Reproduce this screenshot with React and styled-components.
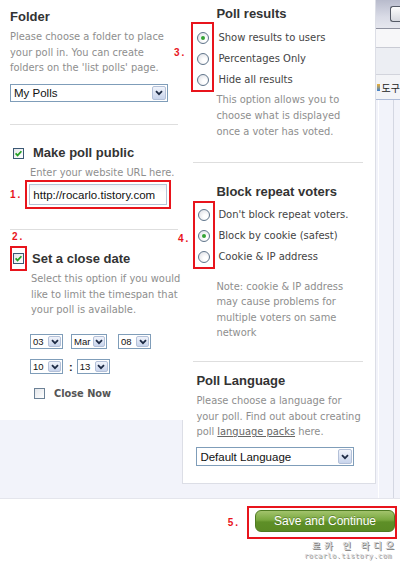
import React from 'react';
import styled, { createGlobalStyle } from 'styled-components';

const GlobalStyle = createGlobalStyle`
  html, body { margin: 0; padding: 0; background: #fff; }
  body { font-family: "DejaVu Sans", Verdana, sans-serif; }
`;

const Screen = styled.div`
  position: relative;
  width: 400px;
  height: 561px;
  overflow: hidden;
  background: #fff;
`;

const Workspace = styled.div`
  display: flex;
  align-items: flex-start;
  height: 499px;
  box-sizing: border-box;
  background: #f2f3fa;
  border-bottom: 1px solid #e4e5ec;
`;

const LeftPanel = styled.div`
  position: relative;
  z-index: 1;
  width: 185px;
  height: 420px;
  box-sizing: border-box;
  padding: 9px 0 0 10px;
  background: #fff;
`;

const RightPanel = styled.div`
  width: 195px;
  height: 484px;
  margin-left: -1px;
  box-sizing: border-box;
  padding-top: 6px;
  background: #fff;
  border: 1px solid #dcdee6;
  border-top: none;
`;

const Title = styled.div`
  font-family: "Liberation Sans", Arial, sans-serif;
  font-weight: bold;
  font-size: 13px;
  line-height: 16px;
  color: #333;
  margin-top: ${p => p.$mt || 0}px;
  margin-left: ${p => p.$ml || 0}px;
  grid-column: ${p => p.$col || 'auto'};
  white-space: nowrap;
`;

const Hint = styled.div`
  font-size: 9.9px;
  line-height: ${p => p.$lh || 15.5}px;
  color: #8e8e8e;
  margin-top: ${p => p.$mt || 0}px;
  margin-left: ${p => p.$ml || 0}px;
  grid-column: ${p => p.$col || 'auto'};
  white-space: nowrap;
`;

const Link = styled.span`
  color: #666;
  text-decoration: underline;
`;

const Divider = styled.div`
  height: 1px;
  background: #dedede;
  width: ${p => p.$w}px;
  margin-top: ${p => p.$mt}px;
  margin-left: ${p => p.$ml || 0}px;
`;

const Row = styled.div`
  display: flex;
  align-items: center;
  margin-top: ${p => p.$mt || 0}px;
  margin-left: ${p => p.$ml || 0}px;
`;

const RedBox = styled.div`
  position: relative;
  box-sizing: border-box;
  border: 2px solid #e8141c;
  padding: ${p => p.$pad || '0'};
  margin-top: ${p => p.$mt || 0}px;
  display: flex;
  flex-direction: ${p => (p.$column ? 'column' : 'row')};
  align-items: center;
  grid-column: ${p => p.$col || 'auto'};
`;

const Marker = styled.span`
  font-family: "Liberation Sans", Arial, sans-serif;
  font-weight: bold;
  font-size: 10px;
  line-height: 10px;
  letter-spacing: 2px;
  color: #e8141c;
  white-space: nowrap;
  margin-left: ${p => p.$ml || 0}px;
  margin-right: ${p => p.$mr || 0}px;
  margin-top: ${p => p.$mt || 0}px;
  display: block;
`;

const SideMarker = styled(Marker)`
  position: absolute;
  z-index: 2;
  right: calc(100% + ${p => p.$gap}px);
  top: ${p => p.$top}px;
`;

const CheckBoxFrame = styled.span`
  flex: none;
  width: 11px;
  height: 11px;
  box-sizing: border-box;
  border: 1px solid ${p => (p.$on ? '#3b5874' : '#6c8196')};
  background: linear-gradient(135deg, #e4e6ea, #fff);
  display: flex;
  align-items: center;
  justify-content: center;
`;

const CheckBox = ({ on }) => (
  <CheckBoxFrame $on={on}>
    {on && (
      <svg width="9" height="9" viewBox="0 0 9 9">
        <path d="M1.6 4.3 L3.6 6.4 L7.4 2.2" fill="none" stroke="#23a023" strokeWidth="1.7" />
      </svg>
    )}
  </CheckBoxFrame>
);

const RadioRow = styled.div`
  height: 21px;
  display: flex;
  align-items: center;
  justify-content: center;
`;

const CheckCell = styled.div`
  height: 21px;
  padding: 0 1px;
  display: flex;
  align-items: center;
`;

const RadioDot = styled.span`
  width: 12px;
  height: 12px;
  box-sizing: border-box;
  border-radius: 50%;
  border: 1px solid #60758b;
  background: radial-gradient(circle at 65% 65%, #fff 20%, #d9dbe1 100%);
  display: flex;
  align-items: center;
  justify-content: center;
  &::after {
    content: '';
    width: 4px;
    height: 4px;
    border-radius: 50%;
    background: ${p => (p.$on ? '#35a335' : 'transparent')};
  }
`;

const OptionGrid = styled.div`
  display: grid;
  grid-template-columns: ${p => p.$c}px 1fr;
  column-gap: ${p => p.$gap}px;
  padding-left: ${p => p.$pl}px;
  margin-top: ${p => p.$mt || 0}px;
`;

const Labels = styled.div`
  grid-column: 2;
  padding: ${p => p.$pt}px 0 0 2px;
`;

const OptionLabel = styled.div`
  height: 21px;
  line-height: 21px;
  font-size: 10px;
  color: #444;
  white-space: nowrap;
`;

const SelectFrame = styled.div`
  display: flex;
  box-sizing: border-box;
  width: ${p => p.$w}px;
  height: ${p => p.$h}px;
  border: 1px solid #7f9db9;
  background: #fff;
  margin-left: ${p => p.$ml || 0}px;
  margin-top: ${p => p.$mt || 0}px;
  flex: none;
`;

const SelectText = styled.span`
  flex: 1;
  display: flex;
  align-items: center;
  padding-left: ${p => p.$pl}px;
  font-family: "Liberation Sans", Arial, sans-serif;
  font-size: ${p => p.$fs}px;
  color: #111;
  white-space: nowrap;
  overflow: hidden;
`;

const DropButton = styled.span`
  flex: none;
  width: ${p => p.$bw}px;
  margin: 1px;
  box-sizing: border-box;
  border: 1px solid #b3c0d8;
  border-radius: 2px;
  background: linear-gradient(#f1f4fb, #c8d4ec);
  display: flex;
  align-items: center;
  justify-content: center;
`;

const Select = ({ value, w, h, fs = 11.5, bw = 14, pl = 3, ml, mt }) => (
  <SelectFrame $w={w} $h={h} $ml={ml} $mt={mt}>
    <SelectText $fs={fs} $pl={pl}>{value}</SelectText>
    <DropButton $bw={bw}>
      <svg width="8" height="6" viewBox="0 0 8 6">
        <path d="M1 1.2 L4 4.2 L7 1.2" fill="none" stroke="#1e2b45" strokeWidth="1.8" />
      </svg>
    </DropButton>
  </SelectFrame>
);

const UrlInput = styled.div`
  width: 138px;
  height: 21px;
  box-sizing: border-box;
  border: 1px solid #b5c3d6;
  background: linear-gradient(#eef1f6, #fff 40%);
  padding-left: 3px;
  display: flex;
  align-items: center;
  font-family: "Liberation Sans", Arial, sans-serif;
  font-size: 11.5px;
  color: #111;
  white-space: nowrap;
`;

const Colon = styled.span`
  font-family: "Liberation Sans", Arial, sans-serif;
  font-weight: bold;
  font-size: 11px;
  color: #222;
  margin-left: 6px;
`;

const SmallBold = styled.span`
  font-weight: bold;
  font-size: 9.8px;
  color: #555;
  margin-left: 9px;
`;

const Section = styled.div`
  padding-left: ${p => p.$pl}px;
  margin-top: ${p => p.$mt || 0}px;
`;

/* browser chrome peeking in at the right edge */
const Chrome = styled.div`
  flex: 1;
  align-self: stretch;
  display: flex;
  flex-direction: column;
`;

const TitleBar = styled.div`
  height: 28px;
  border-bottom: 1px solid #8d909e;
  background: linear-gradient(#b8bbcc, #d9dbe6 60%, #e6e7ee);
  display: flex;
  justify-content: flex-end;
  align-items: center;
`;

const WinButton = styled.span`
  width: 9px;
  height: 14px;
  border: 1px solid #555a66;
  border-right: none;
  border-radius: 3px 0 0 3px;
  background: linear-gradient(#fdfdfd, #d6d8df);
`;

const Band = styled.div`
  height: ${p => p.$h}px;
  background: ${p => p.$bg};
  border-bottom: 1px solid ${p => p.$line};
  display: flex;
  align-items: center;
  overflow: hidden;
  white-space: nowrap;
`;

const ToolText = styled.span`
  font-family: "Noto Sans CJK KR", sans-serif;
  font-size: 10px;
  color: #222;
  margin-left: 2px;
`;

const ToolIcon = styled.span`
  flex: none;
  width: 3px;
  height: 7px;
  margin-left: 1px;
  background: linear-gradient(#f0b030, #3d7fd0);
`;

const ChromeBody = styled.div`
  flex: 1;
  margin-left: 2px;
  border-left: 1px solid #fff;
  display: flex;
  justify-content: flex-end;
`;

const ChromeRule = styled.div`
  width: 6px;
  border-left: 1px solid #d4d7e2;
`;

const Footer = styled.div`
  display: flex;
  justify-content: flex-end;
  align-items: center;
  padding: 7px 3px 0 0;
`;

const SaveButton = styled.div`
  width: 140px;
  height: 22px;
  box-sizing: border-box;
  border: 1px solid #4f7b22;
  border-radius: 6px;
  background: linear-gradient(#a2c36c, #79a83f 45%, #5e8f27 55%, #5a8a24);
  color: #fff;
  font-family: "Liberation Sans", Arial, sans-serif;
  font-size: 12px;
  display: flex;
  align-items: center;
  justify-content: center;
  text-shadow: 0 -1px 0 rgba(0, 0, 0, 0.25);
`;

const Watermark = styled.div`
  position: absolute;
  right: 0;
  top: 540px;
  width: 96px;
  color: #d4d4d4;
  text-shadow: 1px 1px 0 #8a8a8a;
`;

const WatermarkKo = styled.div`
  font-family: "Noto Sans CJK KR", sans-serif;
  font-weight: bold;
  font-size: 9px;
  line-height: 11px;
  letter-spacing: 4px;
  padding-left: 8px;
  white-space: nowrap;
`;

const WatermarkEn = styled.div`
  font-family: "DejaVu Sans Mono", monospace;
  font-size: 7px;
  line-height: 9px;
  letter-spacing: 0.4px;
  margin-top: 1px;
  white-space: nowrap;
`;

export default function App() {
  return (
    <>
      <GlobalStyle />
      <Screen>
        <Workspace>
          <LeftPanel>
            <Title>Folder</Title>
            <Hint $mt={4}>
              Please choose a folder to place<br />
              your poll in. You can create<br />
              folders on the 'list polls' page.
            </Hint>
            <Select value="My Polls" w={158} h={18} mt={8.5} />
            <Divider $w={168} $mt={22} />

            <Row $mt={20} $ml={3}>
              <CheckBox on />
              <Title $ml={9}>Make poll public</Title>
            </Row>
            <Hint $ml={20} $mt={4} $lh={15}>Enter your website URL here.</Hint>
            <Row>
              <Marker $mr={3}>1.</Marker>
              <RedBox $pad="2px">
                <UrlInput>http://rocarlo.tistory.com</UrlInput>
              </RedBox>
            </Row>
            <Divider $w={168} $mt={20} />

            <Marker $ml={2} $mt={2}>2.</Marker>
            <Row $mt={4}>
              <RedBox>
                <CheckCell>
                  <CheckBox on />
                </CheckCell>
              </RedBox>
              <Title $ml={5}>Set a close date</Title>
            </Row>
            <Hint $ml={21}>
              Select this option if you would<br />
              like to limit the timespan that<br />
              your poll is available.
            </Hint>
            <Row $mt={16.5} $ml={20}>
              <Select value="03" w={33} h={15} fs={9.5} bw={13} pl={2} />
              <Select value="Mar" w={36} h={15} fs={9.5} bw={12} pl={2} ml={8} />
              <Select value="08" w={33} h={15} fs={9.5} bw={13} pl={2} ml={11} />
            </Row>
            <Row $mt={10} $ml={20}>
              <Select value="10" w={33} h={15} fs={9.5} bw={13} pl={2} />
              <Colon>:</Colon>
              <Select value="13" w={33} h={15} fs={9.5} bw={13} pl={2} ml={4} />
            </Row>
            <Row $mt={14} $ml={24}>
              <CheckBox />
              <SmallBold>Close Now</SmallBold>
            </Row>
          </LeftPanel>

          <RightPanel>
            <OptionGrid $pl={8} $c={23} $gap={2}>
              <Title $col={2}>Poll results</Title>
              <RedBox $column $pad="3px 0 0" $col={1}>
                <SideMarker $gap={7} $top={24}>3.</SideMarker>
                <RadioRow><RadioDot $on /></RadioRow>
                <RadioRow><RadioDot /></RadioRow>
                <RadioRow><RadioDot /></RadioRow>
              </RedBox>
              <Labels $pt={5}>
                <OptionLabel>Show results to users</OptionLabel>
                <OptionLabel>Percentages Only</OptionLabel>
                <OptionLabel>Hide all results</OptionLabel>
              </Labels>
              <Hint $col={2} $lh={16}>
                This option allows you to<br />
                choose what is displayed<br />
                once a voter has voted.
              </Hint>
            </OptionGrid>
            <Divider $w={170} $ml={10} $mt={22} />

            <OptionGrid $pl={10} $c={22} $gap={1} $mt={21}>
              <Title $col={2}>Block repeat voters</Title>
              <RedBox $column $pad="1px 0 0" $col={1} $mt={1}>
                <SideMarker $gap={5} $top={31}>4.</SideMarker>
                <RadioRow><RadioDot /></RadioRow>
                <RadioRow><RadioDot $on /></RadioRow>
                <RadioRow><RadioDot /></RadioRow>
              </RedBox>
              <Labels $pt={4}>
                <OptionLabel>Don't block repeat voters.</OptionLabel>
                <OptionLabel>Block by cookie (safest)</OptionLabel>
                <OptionLabel>Cookie &amp; IP address</OptionLabel>
              </Labels>
              <Hint $col={2} $lh={15.3} $mt={10}>
                Note: cookie &amp; IP address<br />
                may cause problems for<br />
                multiple voters on same<br />
                network
              </Hint>
            </OptionGrid>
            <Divider $w={170} $ml={10} $mt={21} />

            <Section $pl={13} $mt={11}>
              <Title>Poll Language</Title>
              <Hint $mt={4}>
                Please choose a language for<br />
                your poll. Find out about creating<br />
                poll <Link>language packs</Link> here.
              </Hint>
              <Select value="Default Language" w={158} h={19} mt={7.5} />
            </Section>
          </RightPanel>

          <Chrome>
            <TitleBar><WinButton /></TitleBar>
            <Band $h={18} $bg="#f7f7f9" $line="#c9cbd4" />
            <Band $h={26} $bg="#eceef3" $line="#d2d4dc" />
            <Band $h={24} $bg="#f3f4f7" $line="#aebcd8">
              <ToolIcon />
              <ToolText>도구</ToolText>
            </Band>
            <ChromeBody>
              <ChromeRule />
            </ChromeBody>
          </Chrome>
        </Workspace>

        <Footer>
          <Marker $mr={7}>5.</Marker>
          <RedBox $pad="2px 0 5px 6px">
            <SaveButton>Save and Continue</SaveButton>
          </RedBox>
        </Footer>

        <Watermark>
          <WatermarkKo>로카 인 라디오</WatermarkKo>
          <WatermarkEn>rocarlo.tistory.com</WatermarkEn>
        </Watermark>
      </Screen>
    </>
  );
}
